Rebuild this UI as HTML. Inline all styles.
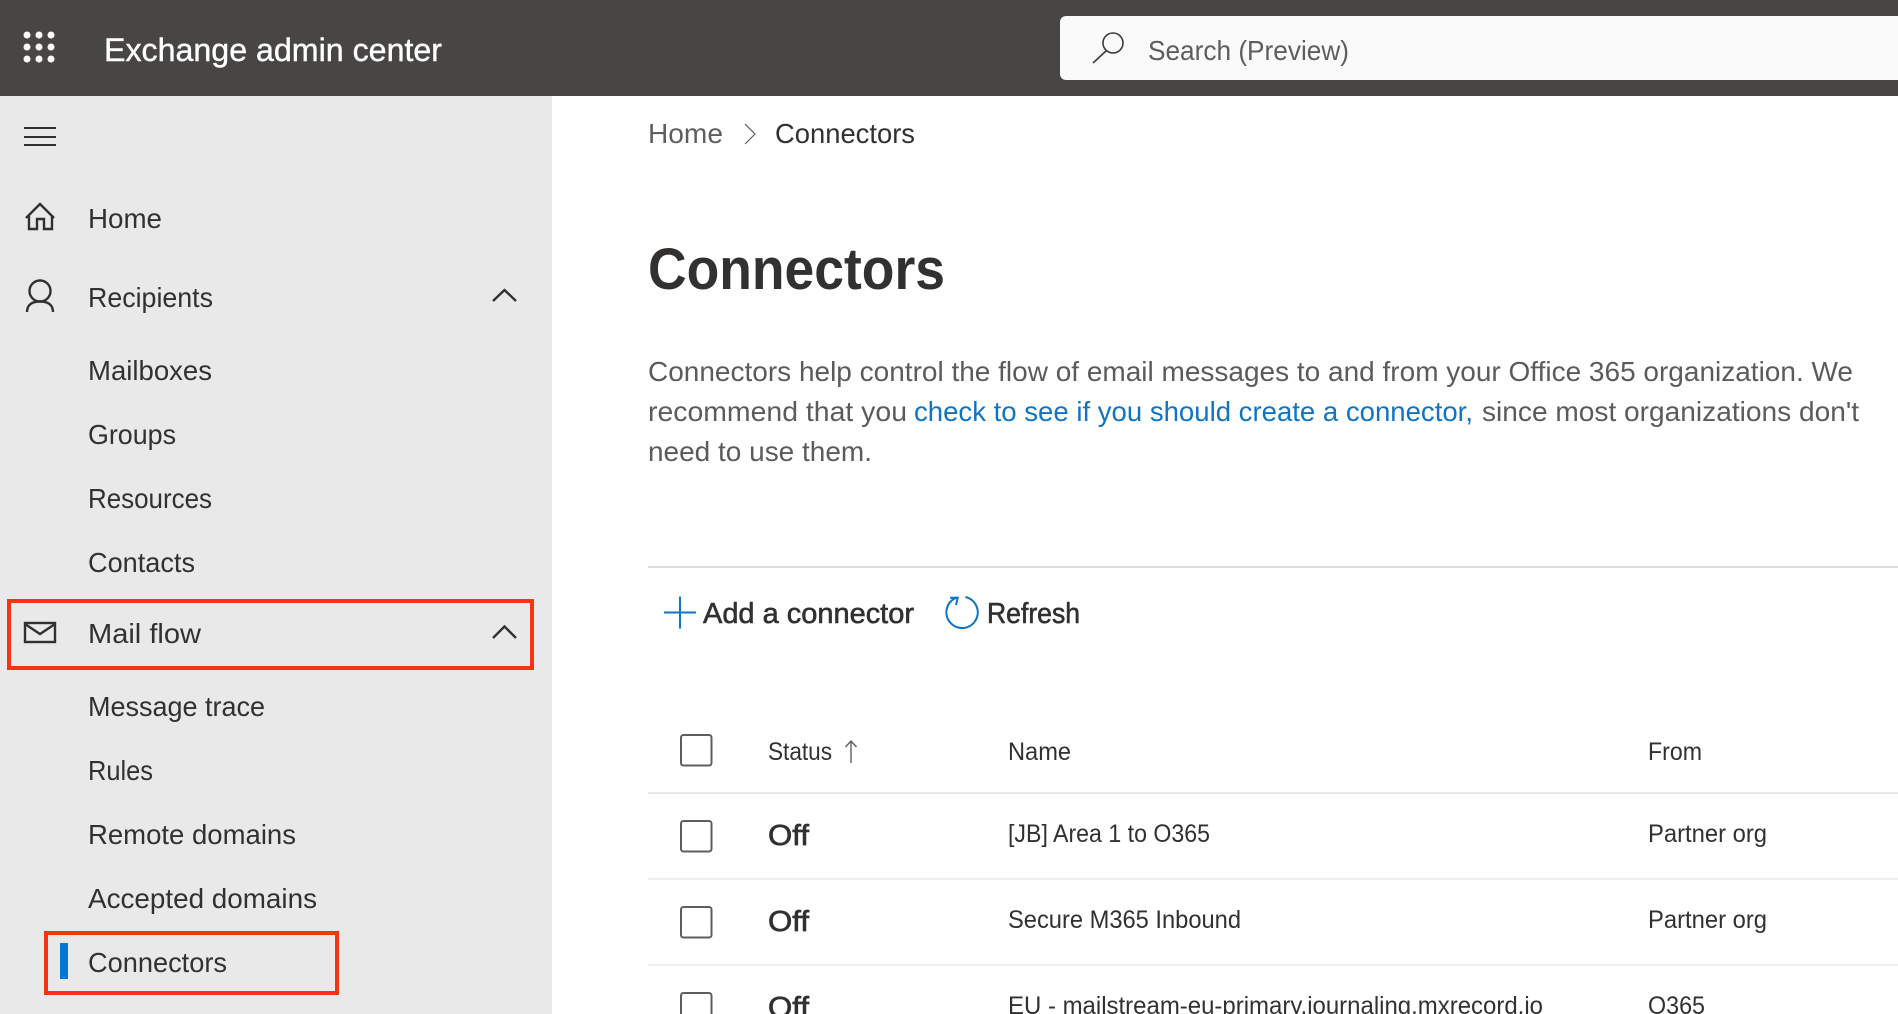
<!DOCTYPE html>
<html lang="en"><head><meta charset="utf-8"><title>Exchange admin center</title>
<style>
html,body{margin:0;padding:0;background:#fff;width:1898px;height:1014px;overflow:hidden}
svg{display:block}
text{font-family:"Liberation Sans",sans-serif;fill:#323130;font-size:26px;white-space:pre}
.nav{font-size:28px}
.semi{stroke:#323130;stroke-width:.6px}
.para{fill:#5c5b5a;font-size:27.5px}
.tb{font-size:25px}
.ic{fill:none;stroke:#323130;stroke-width:2.4}
.cb{fill:#fff;stroke:#605e5c;stroke-width:2}
</style></head><body>
<svg width="1898" height="1014" viewBox="0 0 1898 1014" xmlns="http://www.w3.org/2000/svg">
<rect width="1898" height="96" fill="#484644"/>
<rect x="0" y="96" width="552" height="918" fill="#e9e9e9"/>
<g fill="#fff">
<circle cx="27" cy="35" r="3.500"/><circle cx="39" cy="35" r="3.500"/><circle cx="51" cy="35" r="3.500"/>
<circle cx="27" cy="47" r="3.500"/><circle cx="39" cy="47" r="3.500"/><circle cx="51" cy="47" r="3.500"/>
<circle cx="27" cy="59" r="3.500"/><circle cx="39" cy="59" r="3.500"/><circle cx="51" cy="59" r="3.500"/>
</g>
<text x="104" y="61" textLength="338" lengthAdjust="spacingAndGlyphs" style="fill:#fff;stroke:#fff;stroke-width:.4px;font-size:32px">Exchange admin center</text>
<path d="M1060 22a6 6 0 0 1 6-6H1898V80H1066a6 6 0 0 1-6-6z" fill="#fafafa"/>
<circle cx="1113" cy="43" r="10" fill="none" stroke="#3b3a39" stroke-width="1.6"/>
<path d="M1106 51L1093 63" fill="none" stroke="#3b3a39" stroke-width="1.6"/>
<text x="1148" y="60" textLength="201" lengthAdjust="spacingAndGlyphs" style="fill:#5f5e5d;font-size:28px">Search (Preview)</text>

<path d="M24 128H56M24 137H56M24 145H56" class="ic" style="stroke-width:2"/>
<path d="M26 218L40 204L54 218M29 215V229H37V219H44V229H52V215" class="ic"/>
<circle cx="40" cy="291" r="10.500" class="ic"/>
<path d="M27 312C27 304 33 301.500 40 301.500C47 301.500 53 304 53 312" class="ic"/>
<path d="M493 301L504.500 290L516 301" class="ic"/>
<rect x="25" y="623" width="30" height="19" class="ic"/>
<path d="M25 624L40 634L55 624" class="ic"/>
<path d="M493 638L504.500 626.500L516 638" class="ic"/>

<text class="nav" x="88" y="228" textLength="74" lengthAdjust="spacingAndGlyphs">Home</text>
<text class="nav" x="88" y="307" textLength="125" lengthAdjust="spacingAndGlyphs">Recipients</text>
<text class="nav" x="88" y="380" textLength="124" lengthAdjust="spacingAndGlyphs">Mailboxes</text>
<text class="nav" x="88" y="444" textLength="88" lengthAdjust="spacingAndGlyphs">Groups</text>
<text class="nav" x="88" y="508" textLength="124" lengthAdjust="spacingAndGlyphs">Resources</text>
<text class="nav" x="88" y="572" textLength="107" lengthAdjust="spacingAndGlyphs">Contacts</text>
<text class="nav" x="88" y="643" textLength="113" lengthAdjust="spacingAndGlyphs">Mail flow</text>
<text class="nav" x="88" y="716" textLength="177" lengthAdjust="spacingAndGlyphs">Message trace</text>
<text class="nav" x="88" y="780" textLength="65" lengthAdjust="spacingAndGlyphs">Rules</text>
<text class="nav" x="88" y="844" textLength="208" lengthAdjust="spacingAndGlyphs">Remote domains</text>
<text class="nav" x="88" y="908" textLength="229" lengthAdjust="spacingAndGlyphs">Accepted domains</text>
<text class="nav" x="88" y="972" textLength="139" lengthAdjust="spacingAndGlyphs">Connectors</text>
<rect x="9" y="601" width="523" height="67" fill="none" stroke="#f53411" stroke-width="4"/>
<rect x="46" y="933" width="291" height="60" fill="none" stroke="#f53411" stroke-width="4"/>
<rect x="60" y="943" width="8" height="36" fill="#0078d4"/>

<text x="648" y="143" textLength="75" lengthAdjust="spacingAndGlyphs" style="fill:#605e5c;font-size:28px">Home</text>
<path d="M745 124L755 134L745 144" fill="none" stroke="#605e5c" stroke-width="1.200"/>
<text x="775" y="143" textLength="140" lengthAdjust="spacingAndGlyphs" style="font-size:28px">Connectors</text>
<text x="648" y="289" textLength="297" lengthAdjust="spacingAndGlyphs" style="font-size:58px;font-weight:700">Connectors</text>

<text class="para" x="648" y="381" textLength="1205" lengthAdjust="spacingAndGlyphs">Connectors help control the flow of email messages to and from your Office 365 organization. We</text>
<text class="para" x="648" y="421" textLength="259" lengthAdjust="spacingAndGlyphs">recommend that you</text>
<text x="914" y="421" textLength="559" lengthAdjust="spacingAndGlyphs" style="fill:#0f74c4;font-size:27.5px">check to see if you should create a connector,</text>
<text class="para" x="1482" y="421" textLength="377" lengthAdjust="spacingAndGlyphs">since most organizations don't</text>
<text class="para" x="648" y="461" textLength="224" lengthAdjust="spacingAndGlyphs">need to use them.</text>

<rect x="648" y="566" width="1250" height="2" fill="#dcdcdc"/>
<path d="M664 612.500H696M680 596.500V628.500" fill="none" stroke="#0f74c4" stroke-width="2"/>
<text class="semi" x="703" y="623" textLength="211" lengthAdjust="spacingAndGlyphs" style="font-size:29px">Add a connector</text>
<path d="M965.500 597A15.700 15.700 0 1 1 957.500 597.300" fill="none" stroke="#0f74c4" stroke-width="2"/>
<path d="M950 597.700H957.700L956 605" fill="none" stroke="#0f74c4" stroke-width="2"/>
<text class="semi" x="987" y="623" textLength="93" lengthAdjust="spacingAndGlyphs" style="font-size:29px">Refresh</text>

<rect class="cb" x="681" y="735" width="30.500" height="30.500" rx="2.500"/>
<text class="tb" x="768" y="760" textLength="64" lengthAdjust="spacingAndGlyphs">Status</text>
<path d="M851 763V741M845.500 747L851 741L856.500 747" fill="none" stroke="#605e5c" stroke-width="1.400"/>
<text class="tb" x="1008" y="760" textLength="63" lengthAdjust="spacingAndGlyphs">Name</text>
<text class="tb" x="1648" y="760" textLength="54" lengthAdjust="spacingAndGlyphs">From</text>
<rect x="648" y="792" width="1250" height="2" fill="#e8e8e8"/>

<rect class="cb" x="681" y="821" width="30.500" height="30.500" rx="2.500"/>
<text class="semi" x="768" y="845" textLength="41" lengthAdjust="spacingAndGlyphs" style="font-size:29px;stroke-width:.7px">Off</text>
<text class="tb" x="1008" y="842" textLength="202" lengthAdjust="spacingAndGlyphs">[JB] Area 1 to O365</text>
<text class="tb" x="1648" y="842" textLength="119" lengthAdjust="spacingAndGlyphs">Partner org</text>
<rect x="648" y="878" width="1250" height="2" fill="#efefef"/>

<rect class="cb" x="681" y="907" width="30.500" height="30.500" rx="2.500"/>
<text class="semi" x="768" y="931" textLength="41" lengthAdjust="spacingAndGlyphs" style="font-size:29px;stroke-width:.7px">Off</text>
<text class="tb" x="1008" y="928" textLength="233" lengthAdjust="spacingAndGlyphs">Secure M365 Inbound</text>
<text class="tb" x="1648" y="928" textLength="119" lengthAdjust="spacingAndGlyphs">Partner org</text>
<rect x="648" y="964" width="1250" height="2" fill="#efefef"/>

<rect class="cb" x="681" y="993" width="30.500" height="30.500" rx="2.500"/>
<text class="semi" x="768" y="1017" textLength="41" lengthAdjust="spacingAndGlyphs" style="font-size:29px;stroke-width:.7px">Off</text>
<text class="tb" x="1008" y="1014" textLength="535" lengthAdjust="spacingAndGlyphs">EU - mailstream-eu-primary.journaling.mxrecord.io</text>
<text class="tb" x="1648" y="1014" textLength="57" lengthAdjust="spacingAndGlyphs">O365</text>
</svg>
</body></html>
